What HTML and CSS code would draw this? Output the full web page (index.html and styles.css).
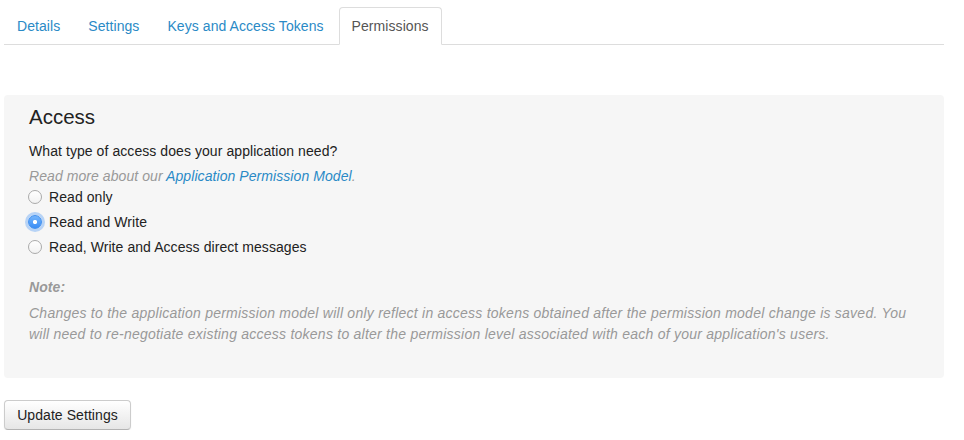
FILE: index.html
```html
<!DOCTYPE html>
<html>
<head>
<meta charset="utf-8">
<link rel="stylesheet" href="styles.css">
</head>
<body>
<div class="page">
  <ul class="tabs">
    <li><a href="#">Details</a></li>
    <li><a href="#">Settings</a></li>
    <li><a href="#">Keys and Access Tokens</a></li>
    <li class="active"><a href="#">Permissions</a></li>
  </ul>
  <form class="form">
    <div class="well">
      <h3 class="title">Access</h3>
      <p class="question">What type of access does your application need?</p>
      <p class="hint">Read more about our <a href="#">Application Permission Model</a>.</p>
      <label class="radio"><input type="radio" name="access"> Read only</label>
      <label class="radio"><input type="radio" name="access" checked> Read and Write</label>
      <label class="radio"><input type="radio" name="access"> Read, Write and Access direct messages</label>
      <p class="note-title">Note:</p>
      <p class="note">Changes to the application permission model will only reflect in access tokens obtained after the permission model change is saved. You will need to re-negotiate existing access tokens to alter the permission level associated with each of your application's users.</p>
    </div>
    <button type="button" class="btn">Update Settings</button>
  </form>
</div>
</body>
</html>
```
FILE: styles.css
```css
html, body {
  margin: 0;
  padding: 0;
  background: #fff;
}
body {
  font-family: "Liberation Sans", Arial, sans-serif;
  font-size: 14px;
  line-height: 20px;
  letter-spacing: 0.07px;
  color: #333;
}
.page {
  padding: 7px 20px 0 4px;
}
.tabs {
  list-style: none;
  margin: 0;
  padding: 0;
  display: flex;
  border-bottom: 1px solid #ddd;
}
.tabs li {
  margin-right: 2px;
  margin-bottom: -1px;
}
.tabs a {
  display: block;
  padding: 8px 12px;
  line-height: 20px;
  border: 1px solid transparent;
  border-radius: 4px 4px 0 0;
  color: #2a8ac6;
  text-decoration: none;
}
.tabs .active a {
  color: #555;
  background: #fff;
  border-color: #ddd #ddd transparent;
}
.form {
  margin-top: 50px;
}
.well {
  background: #f6f6f6;
  border-radius: 4px;
  padding: 10px 25px 33px;
}
.title {
  margin: 0 0 12px;
  font-size: 20.5px;
  font-weight: normal;
  line-height: 24px;
  letter-spacing: 0;
  color: #222;
}
.question {
  margin: 0 0 5px;
  line-height: 20px;
  color: #222;
}
.hint {
  margin: 0 0 1px;
  line-height: 20px;
  font-style: italic;
  color: #999;
}
.hint a {
  color: #2a8ac6;
  text-decoration: none;
}
.radio {
  display: flex;
  align-items: center;
  gap: 7px;
  line-height: 20px;
  margin-bottom: 5px;
  color: #222;
}
.radio input {
  appearance: none;
  -webkit-appearance: none;
  margin: 0 0 0 -1px;
  width: 14px;
  height: 14px;
  border-radius: 50%;
  border: 1px solid #aaa;
  background: linear-gradient(#ffffff, #f2f2f2);
  box-sizing: border-box;
}
.radio input:checked {
  border-color: #3f8ff0;
  background: radial-gradient(circle, #ffffff 0 1.8px, transparent 2.4px), linear-gradient(#74b5fc, #3a8df5);
  box-shadow: 0 0 0 3px rgba(120, 175, 245, 0.5);
}
.note-title {
  margin: 20px 0 5px;
  line-height: 21px;
  font-style: italic;
  font-weight: bold;
  color: #999;
}
.note {
  margin: 0;
  line-height: 21px;
  font-style: italic;
  letter-spacing: 0.24px;
  color: #999;
}
.btn {
  margin-top: 22px;
  font-family: "Liberation Sans", Arial, sans-serif;
  font-size: 14px;
  line-height: 20px;
  letter-spacing: 0.07px;
  color: #222;
  padding: 4px 12px;
  width: 127px;
  height: 30px;
  border: 1px solid #ccc;
  border-bottom-color: #b3b3b3;
  border-radius: 4px;
  background: linear-gradient(#ffffff, #e6e6e6);
  box-shadow: inset 0 1px 0 rgba(255,255,255,.2), 0 1px 2px rgba(0,0,0,.05);
}
```
